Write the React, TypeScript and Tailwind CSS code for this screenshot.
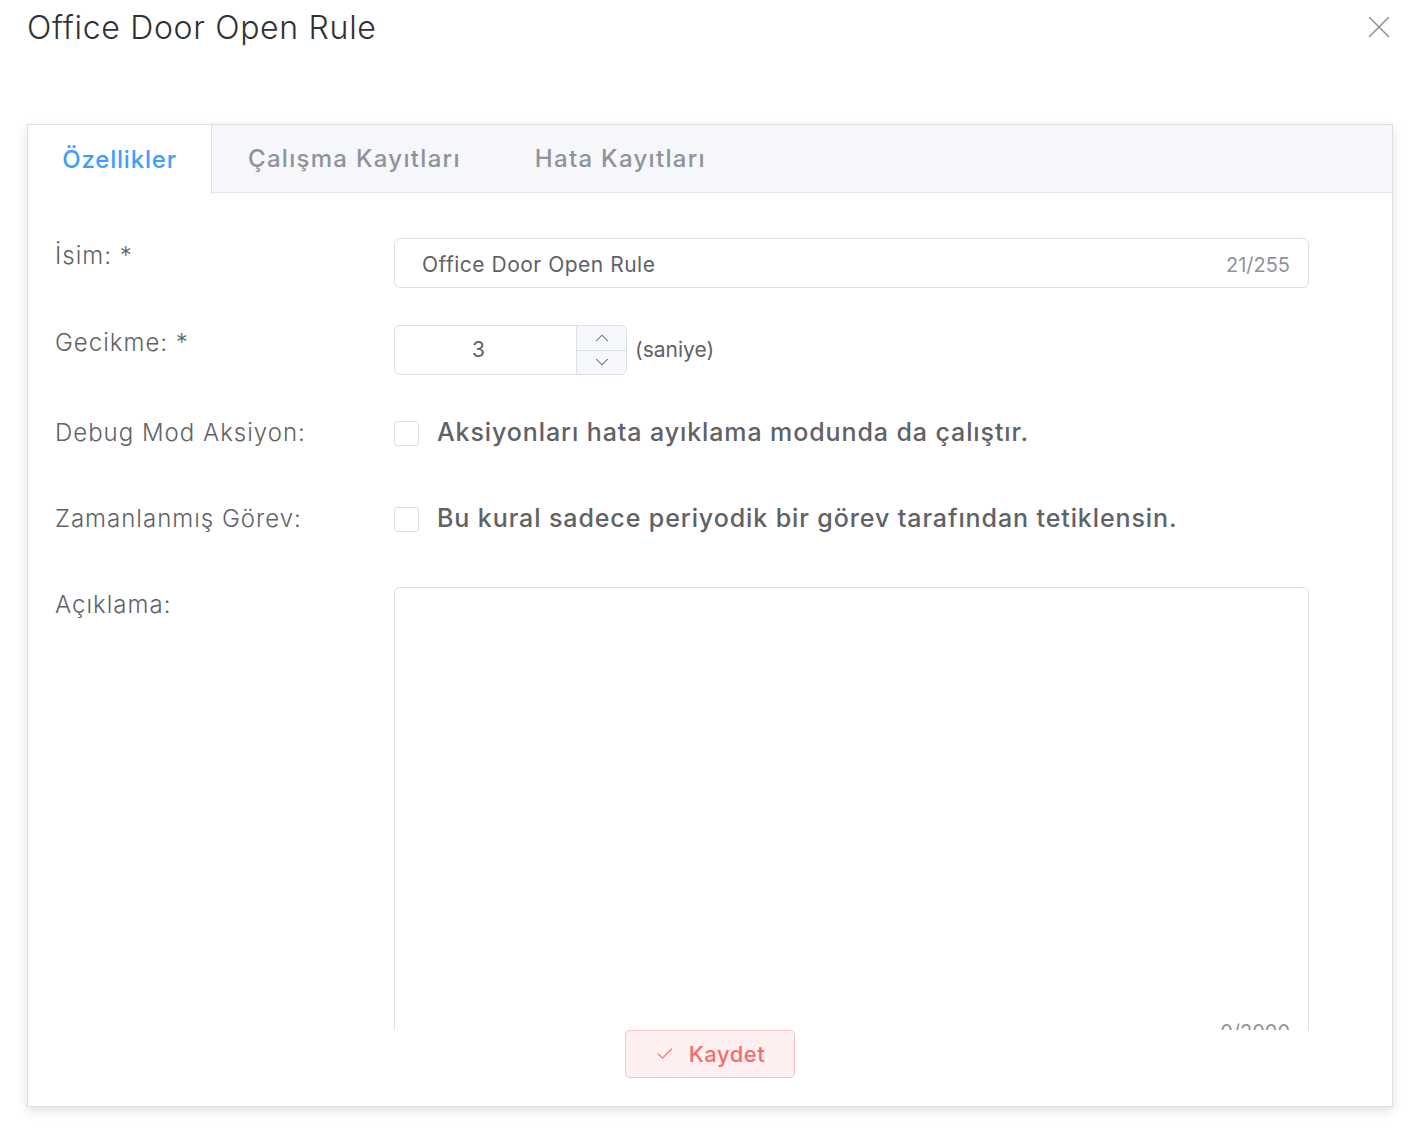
import { Check, ChevronDown, ChevronUp, X } from "lucide-react"

const font = { fontFamily: "Inter, 'Noto Sans', sans-serif" }

const FormRow = ({
  label,
  children,
  className = "",
  center = false,
}: {
  label: string
  children: React.ReactNode
  className?: string
  center?: boolean
}) => (
  <div className={`flex ${center ? "items-center h-[50px]" : "items-start"} ${className}`}>
    <div
      className={`w-[339px] shrink-0 text-[24px] font-light tracking-[1px] text-[#606266] ${
        center ? "leading-[50px]" : "leading-[36px]"
      }`}
    >
      {label}
    </div>
    <div className="flex-1">{children}</div>
  </div>
)

const Checkbox = ({ text }: { text: string }) => (
  <label className="flex items-center gap-[18px] cursor-pointer">
    <span className="w-[25px] h-[25px] rounded-[3px] border border-[#dcdfe6] bg-white" />
    <span className="text-[25px] font-medium text-[#606266] tracking-[0.9px]">{text}</span>
  </label>
)

export default function App() {
  return (
    <div className="min-h-screen w-full bg-white relative" style={font}>
      {/* Dialog header */}
      <div className="h-[124px] px-[27px]">
        <h2 className="text-[32px] leading-[56px] font-light text-[#303133] tracking-[0.7px]">
          Office Door Open Rule
        </h2>
      </div>
      <button className="absolute top-[8px] right-[26px] text-[#909399]">
        <X className="w-[38px] h-[38px]" strokeWidth={1} />
      </button>

      {/* Border card tabs */}
      <div className="ml-[27px] w-[1366px] border border-[#dcdfe6] bg-white shadow-[0_4px_10px_rgba(0,0,0,0.12)]">
        <div className="flex h-[68px] bg-[#f5f7fa] border-b border-[#e4e7ed] text-[24px] font-medium tracking-[1.3px]">
          <div className="w-[184px] h-[69px] bg-white border-r border-[#dcdfe6] flex items-center justify-center text-[#409eff] tracking-[0.8px]">
            Özellikler
          </div>
          <div className="px-[36px] flex items-center text-[#909399]">Çalışma Kayıtları</div>
          <div className="pl-[38px] flex items-center text-[#909399]">Hata Kayıtları</div>
        </div>

        {/* Scrolling form body */}
        <div className="h-[837px] overflow-hidden pl-[27px] pr-[83px] pt-[45px]">
          <FormRow label="İsim: *" className="mb-[37px]">
            <div className="h-[50px] rounded-[6px] border border-[#dcdfe6] flex items-center pl-[27px] pr-[18px] pt-[3px]">
              <span className="flex-1 text-[21px] tracking-[0.5px] text-[#606266]">Office Door Open Rule</span>
              <span className="text-[20px] text-[#909399]">21/255</span>
            </div>
          </FormRow>

          <FormRow label="Gecikme: *" className="mb-[33px]">
            <div className="flex items-center gap-[8px]">
              <div className="w-[233px] h-[50px] rounded-[6px] border border-[#dcdfe6] flex overflow-hidden">
                <div className="flex-1 flex items-center justify-center text-[21px] text-[#606266] pr-[14px]">
                  3
                </div>
                <div className="w-[50px] bg-[#f5f7fa] border-l border-[#dcdfe6] flex flex-col text-[#606266]">
                  <div className="flex-1 flex items-center justify-center border-b border-[#dcdfe6]">
                    <ChevronUp className="w-[22px] h-[22px]" strokeWidth={1.1} />
                  </div>
                  <div className="flex-1 flex items-center justify-center">
                    <ChevronDown className="w-[22px] h-[22px]" strokeWidth={1.1} />
                  </div>
                </div>
              </div>
              <span className="text-[21px] text-[#606266]">(saniye)</span>
            </div>
          </FormRow>

          <FormRow label="Debug Mod Aksiyon:" center className="mb-[36px]">
            <Checkbox text="Aksiyonları hata ayıklama modunda da çalıştır." />
          </FormRow>

          <FormRow label="Zamanlanmış Görev:" center className="mb-[43px]">
            <Checkbox text="Bu kural sadece periyodik bir görev tarafından tetiklensin." />
          </FormRow>

          <FormRow label="Açıklama:">
            <div className="relative h-[462px] rounded-[6px] border border-[#dcdfe6]">
              <span className="absolute right-[18px] bottom-[1px] text-[20px] text-[#909399]">0/2000</span>
            </div>
          </FormRow>
        </div>

        {/* Footer */}
        <div className="h-[76px] flex justify-center items-start">
          <button className="w-[170px] h-[48px] rounded-[5px] border border-[#fbc4c4] bg-[#fef0f0] text-[#f56c6c] flex items-center justify-center gap-[14px] text-[22px] font-medium tracking-[0.5px]">
            <Check className="w-[20px] h-[20px]" strokeWidth={1.3} />
            Kaydet
          </button>
        </div>
      </div>
    </div>
  )
}
